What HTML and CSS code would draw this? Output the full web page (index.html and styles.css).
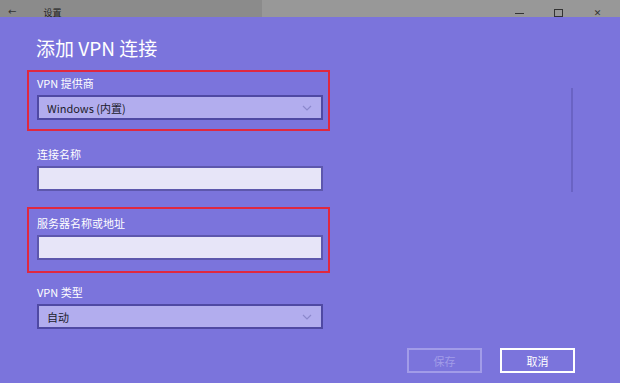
FILE: index.html
```html
<!DOCTYPE html>
<html lang="zh-CN">
<head>
  <meta charset="UTF-8" />
  <title>设置 – 添加 VPN 连接</title>
  <link rel="stylesheet" href="styles.css">
</head>
<body>

<div class="titlebar">
  <div class="titlebar-left">
    <span class="back">&#8592;</span>
    <span class="app-name">设置</span>
  </div>
  <div class="titlebar-right">
    <span class="ctrl ctrl-min"></span>
    <span class="ctrl ctrl-max"></span>
    <span class="ctrl ctrl-close">&#x2715;</span>
  </div>
</div>

<div class="dialog">
  <div class="scroll-thumb"></div>

  <h1>添加 VPN 连接</h1>

  <div class="field highlight first">
    <label>VPN 提供商</label>
    <div class="select">
      <span>Windows (内置)</span>
      <svg class="chevron" width="10" height="6" viewBox="0 0 10 6"><path d="M1 1 L5 5 L9 1" fill="none" stroke="#8c88cc" stroke-width="1.2"/></svg>
    </div>
  </div>

  <div class="field">
    <label>连接名称</label>
    <div class="input"></div>
  </div>

  <div class="field highlight second">
    <label>服务器名称或地址</label>
    <div class="input"></div>
  </div>

  <div class="field">
    <label>VPN 类型</label>
    <div class="select">
      <span>自动</span>
      <svg class="chevron" width="10" height="6" viewBox="0 0 10 6"><path d="M1 1 L5 5 L9 1" fill="none" stroke="#8c88cc" stroke-width="1.2"/></svg>
    </div>
  </div>

  <div class="buttons">
    <button type="button" class="btn disabled">保存</button>
    <button type="button" class="btn">取消</button>
  </div>
</div>

</body>
</html>
```

FILE: styles.css
```css
:root {
  --bg: #7b74dc;
  --select-bg: #b2adee;
  --input-bg: #e7e5f8;
  --field-border: #4f49a3;
  --alert: #e0283f;
}
html, body {
  margin: 0;
  height: 100%;
}
body {
  font-family: "Noto Sans CJK SC", "Noto Sans", sans-serif;
  background: var(--bg);
  color: #fff;
  overflow: hidden;
}
.titlebar {
  display: flex;
  height: 17px;
}
.titlebar-left {
  width: 262px;
  background: #8b8b8b;
  display: flex;
  align-items: center;
  gap: 27px;
  padding-left: 8px;
  box-sizing: border-box;
}
.back {
  font-family: "DejaVu Sans", sans-serif;
  font-size: 10px;
  color: #333;
  padding-top: 6px;
}
.app-name {
  font-size: 9px;
  color: #222;
  padding-top: 7px;
}
.titlebar-right {
  flex: 1;
  background: #989898;
  display: flex;
  justify-content: flex-end;
  align-items: center;
  padding-top: 9px;
  box-sizing: border-box;
}
.ctrl {
  width: 39px;
  display: flex;
  justify-content: center;
  align-items: center;
  height: 8px;
}
.ctrl-min::before {
  content: "";
  width: 9px;
  height: 1px;
  background: #333;
}
.ctrl-max::before {
  content: "";
  width: 7px;
  height: 6px;
  border: 1px solid #333;
}
.ctrl-close {
  font-family: "DejaVu Sans", sans-serif;
  font-size: 9px;
  color: #333;
  padding-right: 3px;
}
.dialog {
  position: relative;
  padding: 0 0 0 37px;
  width: 286px;
}
.scroll-thumb {
  position: absolute;
  left: 571px;
  top: 71px;
  width: 2px;
  height: 104px;
  background: #6a63c4;
}
h1 {
  margin: 0;
  padding: 19px 0 0 0;
  font-size: 19px;
  font-weight: normal;
  line-height: 24px;
  margin-left: -1px;
}
.field label {
  display: block;
  font-size: 11px;
  line-height: 14px;
  margin-bottom: 5px;
}
.field {
  margin-top: 16px;
}
.highlight {
  border: 2px solid var(--alert);
  margin-left: -10px;
  margin-right: -7px;
  padding: 4px 5px 9px 8px;
}
.highlight.first {
  margin-top: 10px;
}
.highlight.second {
  padding-top: 7px;
  padding-bottom: 11px;
  margin-bottom: -4px;
}
.select,
.input {
  height: 25px;
  box-sizing: border-box;
  border: 2px solid var(--field-border);
}
.select {
  background: var(--select-bg);
  display: flex;
  align-items: center;
  justify-content: space-between;
  padding: 0 9px 0 8px;
  color: #1c1c2c;
  font-size: 11px;
}
.input {
  background: var(--input-bg);
  border-color: #5d57ad;
}
.buttons {
  display: flex;
  gap: 18px;
  justify-content: flex-end;
  margin-right: -252px;
  margin-top: 19px;
}
.btn {
  width: 75px;
  height: 25px;
  background: transparent;
  border: 2px solid #fff;
  color: #fff;
  font-family: inherit;
  font-size: 11px;
  padding: 0;
}
.btn.disabled {
  border-color: #a29ce8;
  color: #a29ce8;
}
```
